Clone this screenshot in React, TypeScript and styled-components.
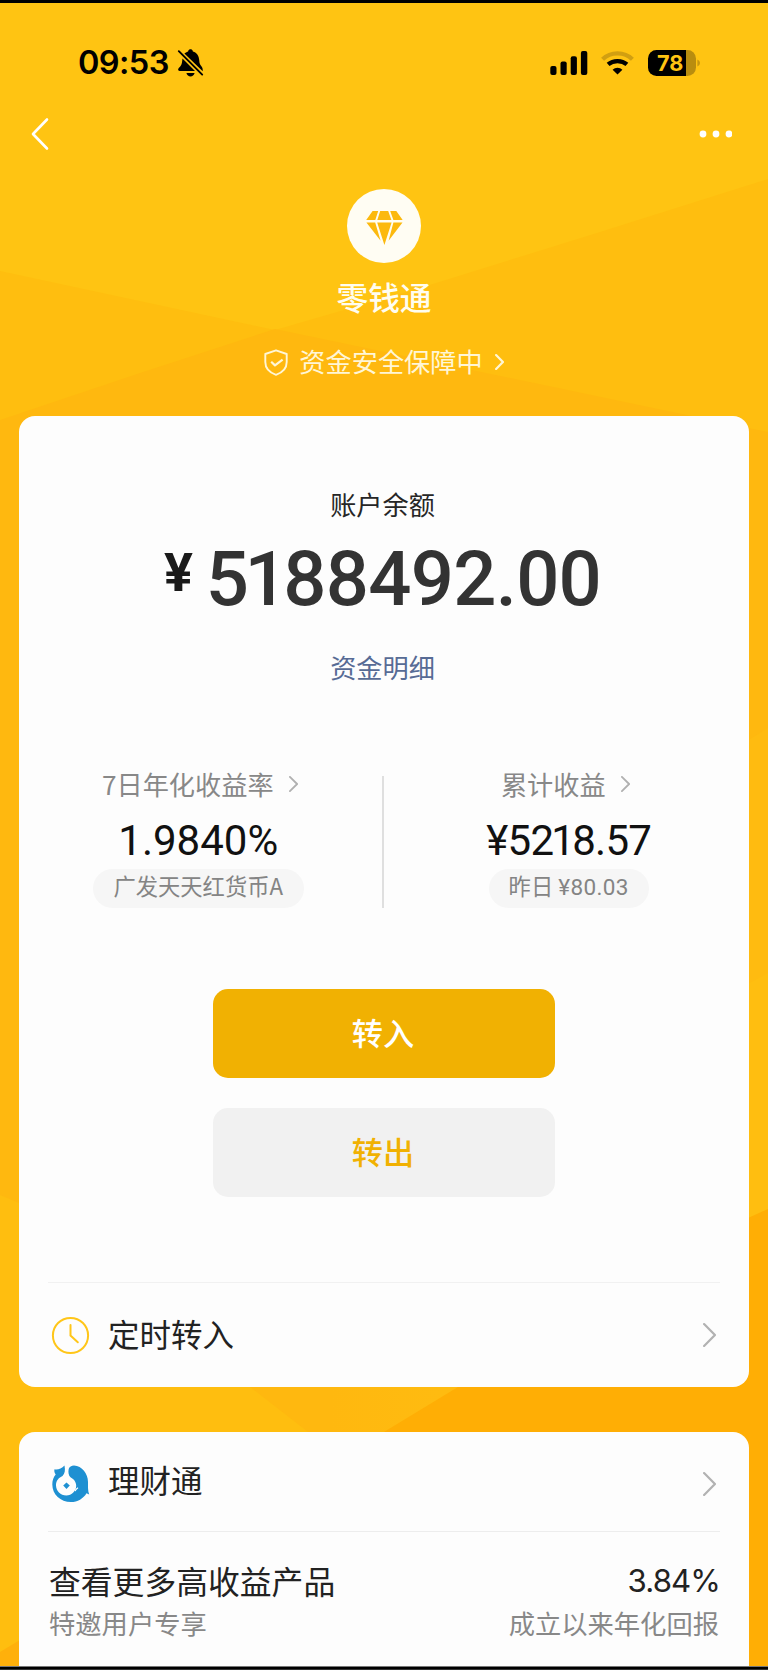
import React from "react";
import styled, { createGlobalStyle, css } from "styled-components";

const cjk = `"Noto Sans CJK SC", sans-serif`;

const GlobalStyle = createGlobalStyle`
  * { box-sizing: border-box; }
  body { margin: 0; background: #ffc412; font-family: ${cjk}; }
  svg { display: block; flex: none; }
`;

const Screen = styled.div`
  position: relative;
  isolation: isolate;
  width: 768px;
  height: 1670px;
  overflow: hidden;
  border-top: 3px solid #000;
  display: flex;
  flex-direction: column;
`;

const Backdrop = styled.svg`
  position: absolute;
  inset: -3px 0 0;
  z-index: -1;
`;

const BottomEdge = styled.div`
  position: absolute;
  left: 0;
  right: 0;
  bottom: 0;
  height: 4px;
  background: #000;
  border-top: 1px solid #777;
  border-bottom: 1px solid #333;
`;

const StatusBar = styled.header`
  flex: none;
  height: 88px;
  padding: 30px 68px 0 78px;
  display: flex;
  justify-content: space-between;
`;

const StatusGroup = styled.div`
  display: flex;
  align-items: center;
  height: 59px;
`;

const Time = styled.span`
  width: 99px;
  font: 600 32.5px/40px Inter, sans-serif;
  letter-spacing: -0.6px;
  white-space: nowrap;
`;

const SignalIcon = styled.svg`
  margin-right: 13px;
`;

const WifiIcon = styled.svg`
  margin-right: 14px;
`;

const Battery = styled.div`
  width: 48px;
  height: 26px;
  border-radius: 8.5px;
  background: linear-gradient(90deg, #000 38px, #b98d0f 38px);
  color: #ffc412;
  font: 700 21.6px/27px Inter, sans-serif;
  padding-left: 9px;
`;

const NavBar = styled.nav`
  flex: none;
  height: 85px;
  padding: 0 36px 0 30px;
  display: flex;
  align-items: center;
  justify-content: space-between;
`;

const Hero = styled.section`
  flex: none;
  height: 239.5px;
  padding-top: 13px;
  display: flex;
  flex-direction: column;
  align-items: center;
`;

const Coin = styled.div`
  width: 74px;
  height: 74px;
  padding-top: 3px;
  border-radius: 50%;
  background: #fffdf3;
  display: flex;
  align-items: center;
  justify-content: center;
`;

const Title = styled.h1`
  margin: 13px 0 0;
  font-size: 31.7px;
  font-weight: 500;
  line-height: 40px;
  color: #fffdf0;
`;

const Safety = styled.div`
  margin-top: 29px;
  display: flex;
  align-items: center;
  height: 34px;
  color: #fff6d6;
  font-size: 26.2px;
  line-height: 34px;
`;

const SafetyText = styled.span`
  margin: -2px 12px 0 11px;
`;

const Card = styled.section<{ $height: number; $top?: number }>`
  height: ${(p) => p.$height}px;
  flex: none;
  margin: 0 19px 45px;
  padding: ${(p) => p.$top ?? 0}px 29px 0;
  border-radius: 16px;
  background: #fdfdfd;
  display: flex;
  flex-direction: column;
`;

const BalanceLabel = styled.div<{ $link?: boolean }>`
  padding-right: 3px;
  text-align: center;
  font-size: 26.2px;
  line-height: 36px;
  color: #262626;
  ${(p) =>
    p.$link &&
    css`
      margin-top: 49px;
      color: #576b95;
    `}
`;

const Balance = styled.div`
  display: flex;
  justify-content: center;
  height: 78px;
  padding-right: 3px;
  font-family: Roboto, sans-serif;
  color: #333;
  white-space: nowrap;
`;

const Currency = styled.span`
  margin: 21px 13px 0 0;
  font-size: 54px;
  line-height: 60px;
  font-weight: 700;
  color: #1a1a1a;
`;

const Amount = styled.span`
  margin-top: 12px;
  font-size: 76px;
  line-height: 90px;
  font-weight: 500;
  letter-spacing: -0.7px;
`;

/* Tightens the side bearings of a "1" inside tabular figures. */
const One = styled.span`
  margin: 0 -0.05em;
`;

const Stats = styled.div`
  display: grid;
  grid-template-columns: 300px 1.5px 300px;
  justify-content: center;
  column-gap: 34px;
  margin-top: 81px;
`;

const Divider = styled.div`
  position: relative;
  left: -1px;
  margin-top: 10px;
  height: 132px;
  background: #dfdfdf;
`;

const Stat = styled.div<{ $inset?: number }>`
  display: flex;
  flex-direction: column;
  align-items: center;
  padding-right: ${(p) => p.$inset ?? 0}px;
`;

const StatLabel = styled.div<{ $shift: number; $gap: number }>`
  display: flex;
  align-items: center;
  gap: ${(p) => p.$gap}px;
  height: 36px;
  margin-left: ${(p) => p.$shift}px;
  font-size: 26.2px;
  line-height: 36px;
  color: #888;
  white-space: nowrap;
`;

const StatValue = styled.div<{ $tight?: boolean }>`
  height: 67px;
  font: 400 42px/77px Roboto, sans-serif;
  letter-spacing: ${(p) => (p.$tight ? -0.7 : 0)}px;
  color: #111;
  white-space: nowrap;
`;

const Pill = styled.div<{ $width: number }>`
  width: ${(p) => p.$width}px;
  height: 39px;
  border-radius: 20px;
  background: #f6f6f6;
  color: #848484;
  font-size: 22.3px;
  line-height: 33px;
  text-align: center;
  white-space: nowrap;
`;

const PillAmount = styled.span`
  font-family: Roboto, sans-serif;
  font-size: 22.5px;
  letter-spacing: 0.4px;
`;

const Actions = styled.div`
  display: flex;
  flex-direction: column;
  align-items: center;
  gap: 30px;
  margin-top: 81px;
`;

const Button = styled.button<{ $primary?: boolean }>`
  width: 342px;
  height: 89px;
  border: 0;
  border-radius: 15px;
  padding: 0 2px 2px 0;
  font: 500 31.2px/40px ${cjk};
  background: ${(p) => (p.$primary ? "#f1b102" : "#f1f1f1")};
  color: ${(p) => (p.$primary ? "#fff" : "#f1b102")};
`;

const Row = styled.div`
  display: flex;
  align-items: center;
  padding: 0 4px 0 3px;
`;

const ScheduledRow = styled(Row)`
  flex: none;
  height: 106px;
  margin-top: 85px;
  border-top: 1.5px solid #f1f1f1;
`;

const WealthRow = styled(Row)`
  height: 100px;
  padding-top: 4px;
  border-bottom: 1.5px solid #ededed;
`;

const RowText = styled.span<{ $lift: number }>`
  flex: 1;
  margin: ${(p) => -p.$lift}px 0 0 18px;
  font-size: 31.5px;
  line-height: 40px;
  color: #222;
`;

const Product = styled.div`
  display: flex;
  justify-content: space-between;
  padding: 25px 1px 0;
  white-space: nowrap;
`;

const ProductSide = styled.div<{ $end?: boolean }>`
  display: flex;
  flex-direction: column;
  align-items: ${(p) => (p.$end ? "flex-end" : "flex-start")};
`;

const ProductName = styled.div`
  font-size: 31.8px;
  line-height: 46px;
  color: #222;
`;

const ProductRate = styled(ProductName)`
  padding-top: 2px;
  line-height: 44px;
  font-family: Inter, sans-serif;
  font-size: 31.2px;
  letter-spacing: -0.9px;
  margin-right: -1px;
`;

const ProductNote = styled.div`
  font-size: 26.3px;
  line-height: 40px;
  color: #888;
`;

function Chevron({ w, h, stroke, color }: { w: number; h: number; stroke: number; color: string }) {
  return (
    <svg width={w} height={h} viewBox={`0 0 ${w} ${h}`} fill="none" stroke={color} strokeWidth={stroke} strokeLinecap="round">
      <path d={`M${stroke / 2} ${stroke / 2} L${w - stroke / 2} ${h / 2} L${stroke / 2} ${h - stroke / 2}`} />
    </svg>
  );
}

function BackgroundFacets() {
  return (
    <Backdrop width="768" height="1670" viewBox="0 0 768 1670">
      <defs>
        <linearGradient id="gap" gradientUnits="userSpaceOnUse" x1="330" y1="0" x2="440" y2="0">
          <stop offset="0" stopColor="#ffb80f" />
          <stop offset="1" stopColor="#ffbb10" />
        </linearGradient>
      </defs>
      <rect width="768" height="1670" fill="#ffc412" />
      <path d="M0 271 L275 330 L420 288 L600 232 L768 179 V1670 H0Z" fill="#ffbe0f" />
      <path d="M0 420 L140 373 L275 329 L568 390 L768 432 V1670 H0Z" fill="#ffb80f" />
      <path d="M768 728 L700 770 V1250 H768Z" fill="#ffbb10" />
      <path d="M768 973 L700 1010 V1250 H768Z" fill="#ffbe10" />
      <path d="M0 1195 L19 1203 L250 1387 L308 1432 V1670 H0Z" fill="#ffbe0f" />
      <path d="M330 1380 H470 L384 1432 H330Z" fill="url(#gap)" />
      <path d="M768 1209 L748 1218 L458 1387 L384 1432 V1670 H768Z" fill="#ffae05" />
      <path d="M0 1652 L30 1634 V1670 H0Z" fill="#ffb00b" />
    </Backdrop>
  );
}

export default function App() {
  return (
    <Screen>
      <GlobalStyle />
      <BackgroundFacets />
      <StatusBar>
        <StatusGroup>
          <Time>09:53</Time>
          <svg width="27" height="28" viewBox="0 0 27 28">
            <path d="M7.4 4.4 C9 3.2 10.3 2.7 11.1 2.4 C11.5 .8 12.5 .3 13.5 .3 C14.5 .3 15.5 .8 15.9 2.4 C20.2 3.8 21.9 7 22.2 11 C22.4 14.6 23 15.6 24.4 17.2 C25.4 18.4 25.9 19.4 25.7 22.2 Z" />
            <path d="M5.5 9.5 L18 22 H3 C1 22 .7 20.6 1.6 19.3 C3.4 17 4.8 16.2 5.1 12.4Z" />
            <path d="M1.8 2.2 L25.2 25.6" stroke="#000" strokeWidth="1.9" strokeLinecap="round" />
            <path d="M9.4 24 H17.6 C17 26.4 15.4 27.4 13.5 27.4 S10 26.4 9.4 24Z" />
          </svg>
        </StatusGroup>
        <StatusGroup>
          <SignalIcon width="38" height="24" viewBox="0 0 38 24">
            <rect x="0.3" y="15" width="6.2" height="9" rx="2" />
            <rect x="10.5" y="10.5" width="6.2" height="13.5" rx="2" />
            <rect x="20.7" y="5.3" width="6.2" height="18.7" rx="2" />
            <rect x="30.9" y="0" width="6.4" height="24" rx="2" />
          </SignalIcon>
          <WifiIcon width="33" height="24" viewBox="0 0 33 24" fill="none" stroke="#000" strokeWidth="4.2">
            <path d="M1.6 8.3 C9.6 .4 23.4 .4 31.4 8.3" stroke="#d19f11" />
            <path d="M7.1 13.4 C12.2 8.9 20.8 8.9 25.9 13.4" />
            <path d="M11.6 18.7 C14.3 16 18.7 16 21.4 18.7 L16.5 23.5Z" fill="#000" stroke="none" />
          </WifiIcon>
          <Battery>78</Battery>
          <svg width="4" height="8" viewBox="0 0 4 8">
            <path d="M1.4 .5 Q4 1.5 4 4 T1.4 7.5Z" fill="#c79710" />
          </svg>
        </StatusGroup>
      </StatusBar>
      <NavBar>
        <svg width="20" height="34" viewBox="0 0 20 34" fill="none" stroke="#fff" strokeWidth="2.6" strokeLinecap="round" strokeLinejoin="round">
          <path d="M17 2.5 L3 17 L17 31.5" />
        </svg>
        <svg width="33" height="8" viewBox="0 0 33 8" fill="#fff">
          <circle cx="4" cy="4" r="3.4" />
          <circle cx="17" cy="4" r="3.4" />
          <circle cx="30" cy="4" r="3.4" />
        </svg>
      </NavBar>
      <Hero>
        <Coin>
          <svg width="37" height="34" viewBox="0 0 37 34" fill="#fcb90e">
            <path d="M6.6 0 H12.2 L9.3 8.9 H.2Z M14.2 0 H22.2 L25.4 8.9 H11.3Z M24.2 0 H30.3 L36.7 8.9 H27.4Z" />
            <path d="M.4 11.4 H9.2 L14.6 29.8Z M11.2 11.4 H25.6 L18.4 34Z M27.4 11.4 H36.5 L22.6 29.8Z" />
          </svg>
        </Coin>
        <Title>零钱通</Title>
        <Safety>
          <svg width="24" height="27" viewBox="0 0 24 27" fill="none" stroke="#fff6d6" strokeWidth="1.9" strokeLinejoin="round">
            <path d="M12 1.3 L22.7 5 V13 C22.7 19.3 18.5 23.6 12 25.8 C5.5 23.6 1.3 19.3 1.3 13 V5Z" />
            <path d="M7.2 12.8 L11 16.4 L18.6 10.6" strokeWidth="2.2" />
          </svg>
          <SafetyText>资金安全保障中</SafetyText>
          <Chevron w={9} h={16} stroke={2.2} color="#fff6d6" />
        </Safety>
      </Hero>

      <Card $height={971.5} $top={70}>
        <BalanceLabel>账户余额</BalanceLabel>
        <Balance>
          <Currency>¥</Currency>
          <Amount>
            5<One>1</One>88492.00
          </Amount>
        </Balance>
        <BalanceLabel $link>资金明细</BalanceLabel>
        <Stats>
          <Stat $inset={2}>
            <StatLabel $shift={3} $gap={15}>
              7日年化收益率
              <Chevron w={9} h={16} stroke={1.8} color="#b0b0b0" />
            </StatLabel>
            <StatValue>1.9840%</StatValue>
            <Pill $width={211}>广发天天红货币A</Pill>
          </Stat>
          <Divider />
          <Stat>
            <StatLabel $shift={-7} $gap={15}>
              累计收益
              <Chevron w={9} h={16} stroke={1.8} color="#b0b0b0" />
            </StatLabel>
            <StatValue $tight>
              ¥52<One>1</One>8.57
            </StatValue>
            <Pill $width={160}>
              昨日 <PillAmount>¥80.03</PillAmount>
            </Pill>
          </Stat>
        </Stats>
        <Actions>
          <Button $primary>转入</Button>
          <Button>转出</Button>
        </Actions>
        <ScheduledRow>
          <svg width="39" height="39" viewBox="0 0 39 39" fill="none" stroke="#ffc619" strokeWidth="2" strokeLinecap="round">
            <circle cx="19.5" cy="19.5" r="17.6" />
            <path d="M19.5 9 V19.5 L26.8 26.3" />
          </svg>
          <RowText $lift={4}>定时转入</RowText>
          <Chevron w={13} h={24} stroke={2.2} color="#b2b2b2" />
        </ScheduledRow>
      </Card>

      <Card $height={300}>
        <WealthRow>
          <svg width="39" height="39" viewBox="0 0 39 39">
            <path
              fill="#1e90d2"
              d="M3.5 5.3 C6.5 6.3 10.5 4.5 13.5 1.5 C14.5 6.5 13.8 9.5 11.5 12 C8 13.5 5 16.5 5 21.2 C5 27 9.6 31.5 15.3 31.5 C20.8 31.5 25.2 27 25.2 21.8 C25.2 17.8 22.5 14.8 19.5 13.3 C17.5 11.5 17 8 17.7 5 C18.3 2.8 20.5 1.5 23 1.5 C31 2 37 9.5 37 18 C37 23 36.8 27 38.2 30.5 L35.5 29.2 C32.5 34.5 26.5 38 20 38 C9.5 38 1.3 30.5 1.3 20.5 C1.3 16.5 2.5 13 4.7 10.5 C3.5 9 3 7 3.5 5.3Z"
            />
            <path fill="#fff" d="M23.8 26.6 C24.6 24.8 25.6 23.8 27 23.3 L27.2 24.4 C26 25 25.2 26 24.6 27.4Z" />
            <path fill="#1e90d2" d="M15.5 18.4 L18.8 21.6 L15.5 24.9 L12.2 21.6Z" />
          </svg>
          <RowText $lift={9}>理财通</RowText>
          <Chevron w={13} h={24} stroke={2.2} color="#b2b2b2" />
        </WealthRow>
        <Product>
          <ProductSide>
            <ProductName>查看更多高收益产品</ProductName>
            <ProductNote>特邀用户专享</ProductNote>
          </ProductSide>
          <ProductSide $end>
            <ProductRate>3.84%</ProductRate>
            <ProductNote>成立以来年化回报</ProductNote>
          </ProductSide>
        </Product>
      </Card>
      <BottomEdge />
    </Screen>
  );
}
